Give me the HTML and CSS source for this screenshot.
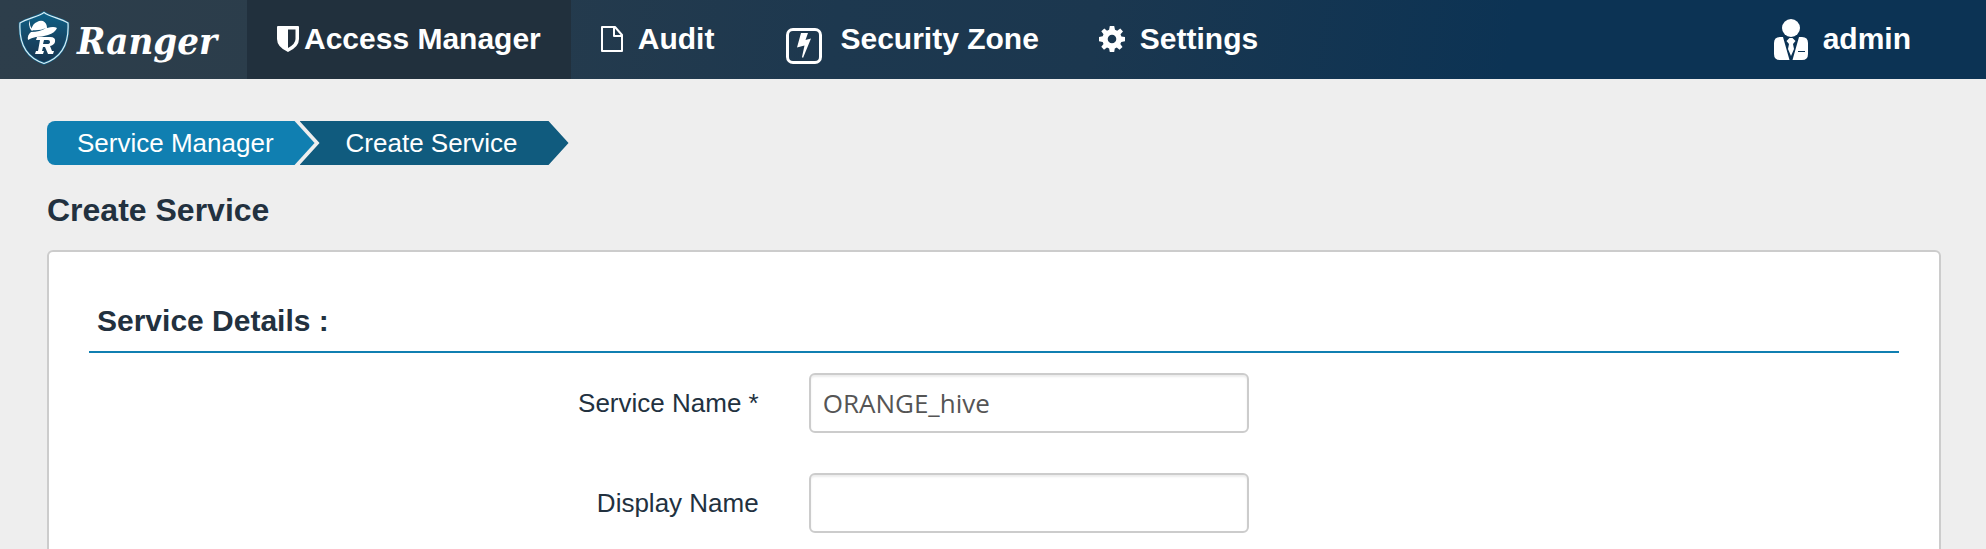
FILE: index.html
```html
<!DOCTYPE html>
<html lang="en">
<head>
<meta charset="utf-8">
<title>Ranger - Create Service</title>
<meta name="viewport" content="width=device-width, initial-scale=1">
<link rel="stylesheet" href="styles.css">
</head>
<body>
<header class="topbar">
  <a class="brand" href="#">
    <svg class="brand-shield" viewBox="0 0 52 54" aria-hidden="true">
      <defs><linearGradient id="shield-fill" x1="0" y1="0" x2="0" y2="1"><stop offset="0" stop-color="#0d6187"/><stop offset="0.500" stop-color="#164766"/><stop offset="1" stop-color="#16344f"/></linearGradient></defs>
      <path d="M26 1.500C20 6 10 7 2 12C1 30 6 46 26 52.500C46 46 51 30 50 12C42 7 32 6 26 1.500Z" fill="url(#shield-fill)" stroke="#12648a" stroke-width="2.500"/>
      <path d="M26 1.500C20 6 10 7 2 12C1 30 6 46 26 52.500C46 46 51 30 50 12C42 7 32 6 26 1.500Z" fill="none" stroke="#d9edf5" stroke-width="1.200"/>
      <path d="M12 9Q11 15 15 19L14 20Q11 17 11 12Z" fill="#fff"/>
      <path d="M13 19Q15 12 19 11Q22 9 25 10Q29 12 29 17Q36 15 39 17Q37 22 30 24Q24 26 18 26Q13 27 10 29Q9 24 13 21Q22 21 28 17Q22 20 13 19Z" fill="#fff"/>
      <path d="M19 26H32Q38 26 37 31Q36 34 32 35L34 40H36L35 43H30L27 36H25L24 40H26L25 43H17L18 40H20L22 29H18ZM26 29L25 33H29Q32 33 32 31Q32 29 30 29Z" fill="#fff" fill-rule="evenodd"/>
    </svg>
    <span class="brand-name">Ranger</span>
  </a>
  <nav class="nav" aria-label="Main">
    <a class="nav-item nav-access active" href="#">
      <svg class="icon-shield" viewBox="0 0 22 26" aria-hidden="true"><path fill="#fff" fill-rule="evenodd" d="M0 1Q0 0 1 0H21Q22 0 22 1V13Q22 21 11 26Q0 21 0 13ZM11 3.500V22Q18.500 18 18.500 13V3.500Z"/></svg>
      <span>Access Manager</span>
    </a>
    <a class="nav-item nav-audit" href="#">
      <svg class="icon-file" viewBox="0 0 22 26" aria-hidden="true"><path fill="none" stroke="#fff" stroke-width="2" stroke-linejoin="round" d="M1 1H14L21 9V25H1ZM13 1V10H21"/></svg>
      <span>Audit</span>
    </a>
    <a class="nav-item nav-zone" href="#">
      <svg class="icon-zone" viewBox="0 0 36 36" aria-hidden="true"><rect x="1.500" y="1.500" width="33" height="33" rx="5.500" fill="none" stroke="#fff" stroke-width="3"/><path fill="#fff" d="M15 5H22L19.500 12L25 10.500L17 30L16 29L18.500 17.500L11 19.500Z"/></svg>
      <span>Security Zone</span>
    </a>
    <a class="nav-item nav-settings" href="#">
      <svg class="icon-gear" viewBox="0 0 26 26" aria-hidden="true"><path fill="#fff" fill-rule="evenodd" d="M10.800 0H15.200L16 3.800L18.200 4.700L21.300 2.500L24 5.500L21.500 8.200L22.400 10.400L26 11V15.200L22.300 15.900L21.300 18L23.500 21L20.500 23.700L17.800 21.500L15.800 22.400L15.200 26H10.800L10.100 22.400L8 21.500L5 23.700L2.300 20.800L4.500 17.900L3.700 15.900L0 15.200V11L3.700 10.300L4.500 8.200L2.300 5.300L5.300 2.500L8 4.700L10.100 3.800ZM13 8.700A4.300 4.300 0 1 0 13 17.300A4.300 4.300 0 1 0 13 8.700Z"/></svg>
      <span>Settings</span>
    </a>
  </nav>
  <a class="user" href="#">
    <svg class="icon-user" viewBox="0 0 34 41" aria-hidden="true"><g fill="#fff"><circle cx="17" cy="9" r="9"/><path d="M6 18H9L15.500 41H6Q0 41 0 35V24Q0 18 6 18ZM28 18H25L18.500 41H28Q34 41 34 35V24Q34 18 28 18ZM15.500 19H18.500L21.500 22L19 25L20 30L17 37L14 30L15 25L12.500 22Z"/></g><path d="M24 32.500H31" stroke="#0c3354" stroke-width="1"/></svg>
    <span>admin</span>
  </a>
</header>
<main class="page">
  <nav class="crumbs" aria-label="Breadcrumb">
    <a class="crumb crumb-first" href="#">Service Manager</a>
    <a class="crumb crumb-current" href="#" aria-current="page">Create Service</a>
  </nav>
  <h1 class="page-title">Create Service</h1>
  <form class="panel">
    <h2 class="section-title">Service Details :</h2>
    <div class="field">
      <label for="service-name">Service Name *</label>
      <input id="service-name" type="text" value="ORANGE_hive">
    </div>
    <div class="field">
      <label for="display-name">Display Name</label>
      <input id="display-name" type="text">
    </div>
  </form>
</main>
</body>
</html>
```
FILE: styles.css
```css
* {
  box-sizing: border-box;
}

body {
  margin: 0;
  background: #eee;
  color: #22313f;
  font-family: "Liberation Sans", Arial, sans-serif;
  font-size: 26px;
}

a {
  color: #fff;
  text-decoration: none;
}

svg {
  display: block;
  flex: none;
}

.topbar {
  display: flex;
  height: 79px;
  background: linear-gradient(100deg, #2d3e4b 0%, #2b3d4b 14%, #1d384f 42%, #1b374f 55%, #0c3354 76%, #0c3354 100%);
  font-size: 30px;
  font-weight: bold;
}

.brand {
  display: flex;
  align-items: center;
  flex: none;
  gap: 7px;
  width: 247px;
  padding-left: 18px;
  padding-bottom: 4px;
}

.brand-shield {
  width: 52px;
  height: 54px;
}

.brand-name {
  font-family: "DejaVu Serif Condensed", "DejaVu Serif", serif;
  font-size: 38px;
  font-style: italic;
  padding-top: 6px;
}

.nav {
  display: flex;
  flex: 1;
}

.nav-item {
  display: flex;
  align-items: center;
  gap: 15px;
  padding: 0 30px 2px;
  line-height: 34px;
  white-space: nowrap;
}

.active {
  background: #21303d;
}

.nav-access {
  gap: 5px;
}

.nav-zone {
  gap: 18px;
  padding-left: 42px;
}

.icon-shield,
.icon-file {
  width: 22px;
  height: 26px;
}

.icon-zone {
  width: 36px;
  height: 36px;
  margin-top: 14px;
}

.icon-gear {
  width: 26px;
  height: 26px;
}

.user {
  display: flex;
  align-items: center;
  gap: 15px;
  padding-right: 75px;
  padding-bottom: 1px;
}

.icon-user {
  width: 34px;
  height: 41px;
}

.page {
  padding: 42px 45px 0 47px;
}

.crumbs {
  display: flex;
}

.crumb {
  height: 44px;
  line-height: 44px;
}

.crumb-first {
  padding: 0 41px 0 30px;
  background: #107fb1;
  border-radius: 8px 0 0 8px;
  clip-path: polygon(0 0, calc(100% - 20px) 0, 100% 50%, calc(100% - 20px) 100%, 0 100%);
}

.crumb-current {
  margin-left: -15px;
  padding: 0 51px 0 46px;
  background: #105b7e;
  clip-path: polygon(0 0, calc(100% - 20px) 0, 100% 50%, calc(100% - 20px) 100%, 0 100%, 20px 50%);
}

.page-title {
  margin: 27px 0 21px;
  font-size: 32px;
  line-height: 37px;
}

.panel {
  padding: 40px 40px 0;
  background: #fff;
  border: 2px solid #ccc;
  border-radius: 6px;
}

.section-title {
  margin: 0 0 20px;
  padding: 9px 8px 11px;
  border-bottom: 2px solid #107fb1;
  font-size: 30px;
  line-height: 39px;
}

.field {
  display: grid;
  grid-template-columns: 37% 440px;
  column-gap: 50px;
  align-items: center;
  margin-bottom: 40px;
}

.field label {
  text-align: right;
}

.field input {
  width: 100%;
  height: 60px;
  padding: 0 12px;
  border: 2px solid #ccc;
  border-radius: 6px;
  background: #fff;
  box-shadow: inset 0 2px 2px rgba(0, 0, 0, 0.075);
  color: #555;
  font-family: "Open Sans", sans-serif;
  font-size: 26px;
}
```
